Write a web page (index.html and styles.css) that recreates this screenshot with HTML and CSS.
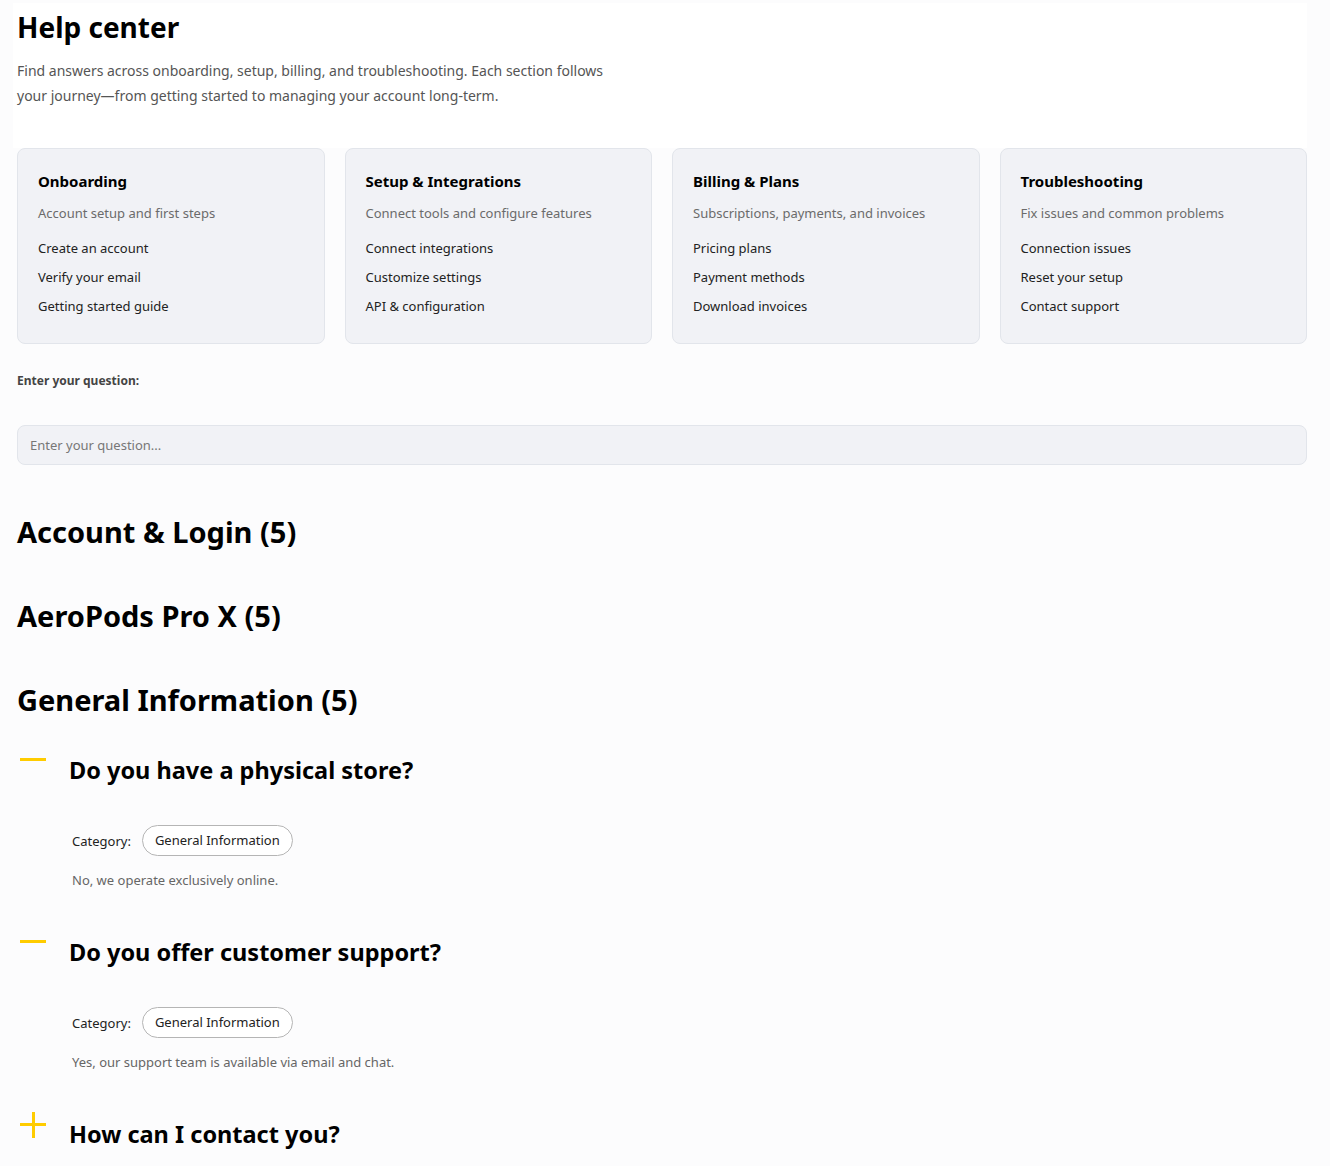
FILE: index.html
```html
<!DOCTYPE html>
<html lang="en">
<head>
<meta charset="utf-8">
<title>Help center</title>
<link rel="stylesheet" href="styles.css">
</head>
<body>
<div class="page">
  <header class="hero">
    <h1 class="hero-title">Help center</h1>
    <p class="hero-text">Find answers across onboarding, setup, billing, and troubleshooting. Each section follows your journey—from getting started to managing your account long-term.</p>
  </header>

  <section class="cards">
    <div class="card">
      <h3 class="card-title">Onboarding</h3>
      <p class="card-desc">Account setup and first steps</p>
      <ul class="card-links">
        <li>Create an account</li>
        <li>Verify your email</li>
        <li>Getting started guide</li>
      </ul>
    </div>
    <div class="card">
      <h3 class="card-title">Setup &amp; Integrations</h3>
      <p class="card-desc">Connect tools and configure features</p>
      <ul class="card-links">
        <li>Connect integrations</li>
        <li>Customize settings</li>
        <li>API &amp; configuration</li>
      </ul>
    </div>
    <div class="card">
      <h3 class="card-title">Billing &amp; Plans</h3>
      <p class="card-desc">Subscriptions, payments, and invoices</p>
      <ul class="card-links">
        <li>Pricing plans</li>
        <li>Payment methods</li>
        <li>Download invoices</li>
      </ul>
    </div>
    <div class="card">
      <h3 class="card-title">Troubleshooting</h3>
      <p class="card-desc">Fix issues and common problems</p>
      <ul class="card-links">
        <li>Connection issues</li>
        <li>Reset your setup</li>
        <li>Contact support</li>
      </ul>
    </div>
  </section>

  <section class="search">
    <label class="search-label" for="q">Enter your question:</label>
    <input class="search-input" id="q" type="text" placeholder="Enter your question...">
  </section>

  <h2 class="group-title">Account &amp; Login (5)</h2>
  <h2 class="group-title">AeroPods Pro X (5)</h2>
  <h2 class="group-title">General Information (5)</h2>

  <div class="faq">
    <div class="faq-item">
      <div class="faq-head">
        <span class="faq-icon"><span class="bar-h"></span></span>
        <h3 class="faq-q">Do you have a physical store?</h3>
      </div>
      <div class="faq-body">
        <div class="faq-cat"><span>Category:</span><span class="pill">General Information</span></div>
        <p class="faq-a">No, we operate exclusively online.</p>
      </div>
    </div>
    <div class="faq-item">
      <div class="faq-head">
        <span class="faq-icon"><span class="bar-h"></span></span>
        <h3 class="faq-q">Do you offer customer support?</h3>
      </div>
      <div class="faq-body">
        <div class="faq-cat"><span>Category:</span><span class="pill">General Information</span></div>
        <p class="faq-a">Yes, our support team is available via email and chat.</p>
      </div>
    </div>
    <div class="faq-item">
      <div class="faq-head plus">
        <span class="faq-icon"><span class="bar-h"></span><span class="bar-v"></span></span>
        <h3 class="faq-q">How can I contact you?</h3>
      </div>
    </div>
  </div>
</div>
</body>
</html>
```

FILE: styles.css
```css
* { box-sizing: border-box; }
html, body { margin: 0; padding: 0; }
body {
  background: #fcfcfd;
  font-family: "Noto Sans", "Open Sans", sans-serif;
  color: #111;
}
.page {
  padding: 3px 23px 0 17px;
}
.hero {
  background: #ffffff;
  margin-left: -4px;
  padding: 0 0 40px 4px;
}
.hero-title {
  margin: 0;
  font-size: 28px;
  line-height: 48px;
  font-weight: 700;
  color: #000;
}
.hero-text {
  margin: 7px 0 0;
  max-width: 600px;
  font-size: 14px;
  line-height: 25px;
  color: #555;
}
.cards {
  display: grid;
  grid-template-columns: repeat(4, 1fr);
  gap: 20px;
  margin-top: 0;
}
.card {
  background: #f1f2f6;
  border: 1px solid #e2e5eb;
  border-radius: 8px;
  padding: 21px 20px 22px;
  height: 196px;
}
.card-title {
  margin: 0;
  font-size: 15px;
  line-height: 22px;
  font-weight: 700;
  color: #000;
}
.card-desc {
  margin: 11px 0 0;
  font-size: 13px;
  line-height: 20px;
  color: #6b6b6b;
}
.card-links {
  list-style: none;
  margin: 11px 0 0;
  padding: 0;
}
.card-links li {
  font-size: 13px;
  line-height: 29px;
  color: #222;
}
.search {
  display: flex;
  flex-direction: column;
  margin-top: 27px;
}
.search-label {
  font-size: 12px;
  line-height: 20px;
  font-weight: 700;
  color: #444;
}
.search-input {
  margin-top: 34px;
  height: 40px;
  width: 100%;
  background: #f1f2f6;
  border: 1px solid #e2e5eb;
  border-radius: 8px;
  padding: 0 12px;
  font-family: inherit;
  font-size: 13px;
  color: #333;
  outline: none;
}
.search-input::placeholder { color: #777; }
.group-title {
  margin: 0;
  font-size: 29px;
  line-height: 40px;
  font-weight: 700;
  color: #000;
}
.search + .group-title { margin-top: 47px; }
.group-title + .group-title { margin-top: 44px; }
.faq { margin-top: 38px; }
.faq-head {
  display: flex;
  align-items: flex-start;
}
.faq-icon {
  position: relative;
  width: 26px;
  height: 26px;
  margin: 0 23px 0 3px;
  flex: none;
}
.bar-h {
  position: absolute;
  left: 0;
  top: 0;
  width: 26px;
  height: 3px;
  background: #ffcc00;
}
.plus .bar-h { top: 11px; }
.bar-v {
  position: absolute;
  left: 11.5px;
  top: 0;
  width: 3px;
  height: 26px;
  background: #ffcc00;
}
.plus .faq-icon { margin-top: -10px; }
.faq-q {
  margin: 0;
  margin-top: -5px;
  font-size: 23.5px;
  line-height: 34px;
  font-weight: 700;
  color: #000;
}
.faq-body {
  padding: 38px 0 50px 55px;
}
.faq-cat {
  display: flex;
  align-items: center;
  gap: 11px;
  font-size: 13px;
  color: #222;
}
.pill {
  display: inline-block;
  border: 1px solid #b5b5b5;
  border-radius: 16px;
  padding: 0 12px;
  line-height: 29px;
  background: #fff;
}
.faq-a {
  margin: 14px 0 0;
  font-size: 13px;
  line-height: 20px;
  color: #666;
}
```
